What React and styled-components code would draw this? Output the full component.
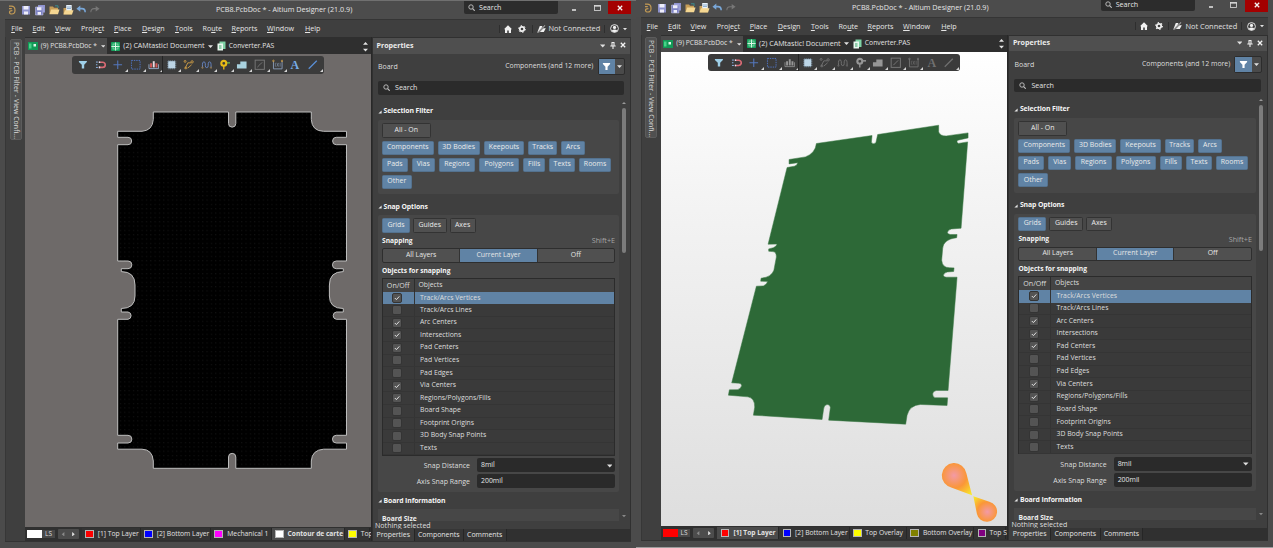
import React from "react";
import styled, { createGlobalStyle, css } from "styled-components";

const Global = createGlobalStyle`
  * { box-sizing: border-box; }
  html, body { margin: 0; padding: 0; }
  body { width: 1273px; height: 548px; overflow: hidden; background: #4b4b4b;
    font-family: "Open Sans", "Noto Sans", sans-serif; font-size: 7px; line-height: 1; color: #dedede; }
`;

const Desktop = styled.main`display: flex; width: 1273px; height: 548px; overflow: hidden;`;
const Frame = styled.div`
  flex: none; overflow: hidden; height: 548px;
  width: ${(p) => p.$w}px;
  ${(p) => p.$lined && css`border-bottom: 1px solid #9c9c9c;`}
`;
const Win = styled.section`
  display: flex; flex-direction: column; width: 636px; height: 550px; background: #4b4b4b;
  ${(p) => p.$raised && css`zoom: 1.0025; margin-top: -2.3px;`}
`;

/* title bar */
const TitleBar = styled.header`
  display: flex; align-items: center; flex: none; height: 19px; background: #4c4c4c; border-top: 1px solid #707070;
  padding-left: 6px; width: 636px;
`;
const QuickIcons = styled.div`display: flex; align-items: center; gap: 2px; width: 110px; svg { flex: none; }`;
const Title = styled.div`width: 352px; padding-left: 100px; font-size: 7.2px; white-space: nowrap; color: #e6e6e6;`;
const TitleSearch = styled.div`
  display: flex; align-items: center; gap: 4px; align-self: flex-start; width: 94px; height: 12.5px; padding-left: 4px; margin-left: -4px;
  background: #2c2c2c; border-radius: 0 0 2px 2px; font-size: 7.1px; color: #e6e6e6;
`;
const WinButtons = styled.div`display: flex; align-self: flex-start; margin-left: 5px;`;
const WinButton = styled.div`
  display: flex; align-items: center; justify-content: center; width: 22.7px; height: 13px;
  background: ${(p) => (p.$close ? "#a40000" : "transparent")};
`;

/* menu */
const MenuBar = styled.nav`
  display: flex; align-items: center; flex: none; width: 626px; height: 18px; margin-left: 5px; padding-left: 6.2px; background: #3f3f3f;
  border-top: 1px solid #353535;
`;
const MenuItem = styled.div`
  width: ${(p) => p.$w}px; font-size: 7.15px; white-space: nowrap; color: #e6e6e6;
  u { text-decoration-thickness: 0.6px; text-underline-offset: 1px; }
`;
const MenuTools = styled.div`display: flex; align-items: center; margin-left: auto; padding-right: 4px; white-space: nowrap; svg { flex: none; }`;
const Connection = styled.div`width: 57.5px; padding-left: 3px; font-size: 7.4px; color: #e0e0e0;`;
const Divider = styled.i`width: 1px; height: 8px; background: #2e2e2e; margin: 0 ${(p) => p.$r ?? 4}px 0 ${(p) => p.$l ?? 4}px;`;
const GearSlot = styled.span`display: flex; margin-left: 6.5px;`;
const CaretSlot = styled.span`display: flex; margin-left: 4.5px;`;

/* body */
const Body = styled.div`display: flex; flex: none; width: 626px; height: 505px; margin-left: 5px; background: #303030; border-bottom: 1px solid #333;`;
const Rail = styled.aside`width: 20px; flex: none; background: #3f3f3f; padding: 2px 0 0 3.5px; border-left: 1px solid #373737;`;
const RailTab = styled.div`
  display: flex; align-items: center; width: 12px; height: 101px; background: #505050; border: 1px solid #5c5c5c; border-radius: 2px;
  writing-mode: vertical-rl; padding-top: 2px; white-space: nowrap; font-size: 6.9px; letter-spacing: 0.08px;
`;
const Center = styled.div`display: flex; flex-direction: column; width: 347px; flex: none; border-right: 1px solid #282828;`;
const DocTabs = styled.div`display: flex; align-items: center; height: 17px; flex: none; padding-top: 1px; background: #2f2f2f;`;
const DocTab = styled.div`
  display: flex; align-items: center; height: 15.5px; width: ${(p) => p.$w}px; padding-left: ${(p) => p.$pl}px; gap: 3px;
  white-space: nowrap; font-size: ${(p) => p.$fs || 7}px; color: #e2e2e2;
  background: ${(p) => (p.$active ? "#4b4b4b" : "transparent")};
  svg { flex: none; }
  svg:last-child { margin-left: ${(p) => p.$caret || 0}px; }
`;
const Canvas = styled.div`
  position: relative; height: 473px; flex: none; overflow: hidden;
  background: ${(p) => (p.$light ? "linear-gradient(#ffffff, #f4f4f4 30%, #dedede)" : "#6e6a69")};
`;
const Toolbar = styled.div`
  position: absolute; left: 47px; top: 2px; width: 252px; height: 17.5px; display: flex; align-items: center; padding-left: 2px;
  background: #3b3b3b; border-radius: 3px;
`;
const Tool = styled.div`
  display: flex; align-items: center; justify-content: center; position: relative; width: 17.7px; height: 17px;
  svg { display: block; }
  ${(p) => p.$more && css`&::after { content: ""; position: absolute; right: -1px; bottom: 1px; border-left: 3px solid transparent; border-bottom: 3px solid #d4d4d4; }`}
  ${(p) => p.$rule && css`border-left: 1px solid #252525;`}
`;
const LayerBar = styled.div`display: flex; align-items: center; height: 14px; flex: none; padding-left: 2px; overflow: hidden; background: #303030;`;
const LayerSet = styled.div`
  display: flex; align-items: center; flex: none; width: 27.5px; height: 8.5px; margin-right: 3.3px; background: #484848; font-size: 6.5px; color: #ddd;
  &::before { content: ""; flex: none; width: 15px; height: 8px; margin-right: 3px; background: ${(p) => p.$color}; }
`;
const LayerNav = styled.div`
  display: flex; align-items: center; justify-content: space-around; flex: none; width: 21px; height: 10px; margin-right: 3px; background: #4c4c4c; border-radius: 1px;
`;
const LayerTab = styled.div`
  display: flex; align-items: center; flex: none; width: ${(p) => p.$w}px; height: 12.5px; padding-left: 3.5px; white-space: nowrap;
  font-size: ${(p) => (p.$active ? 6.6 : 6.75)}px; font-weight: ${(p) => (p.$active ? 700 : 400)};
  background: ${(p) => (p.$active ? "#4b4b4b" : "#343434")}; border-right: 1px solid #272727; color: #e2e2e2;
  &::before { content: ""; flex: none; width: 6.5px; height: 6.5px; margin-right: ${(p) => p.$gap || 4.5}px; border: 0.6px solid #b5b5b5; background: ${(p) => p.$color}; }
`;

/* properties panel */
const Panel = styled.aside`display: flex; flex-direction: column; width: 257px; margin-left: 1px; height: 504px;`;
const PanelHead = styled.div`
  display: flex; align-items: center; height: 15.5px; margin-top: 1px; flex: none; padding: 0 4px 1px 3.5px; background: #4f4f4f;
  font-size: 7.1px; font-weight: 700; color: #ececec;
  svg { margin-left: 4.5px; } svg:first-of-type { margin-left: auto; }
`;
const PanelBody = styled.div`position: relative; display: flex; flex-direction: column; height: 475px; flex: none; padding: 0 5px; background: #3f3f3f; overflow: hidden;`;
const ObjectRow = styled.div`display: flex; align-items: center; height: 25px; flex: none; margin-top: 0.5px;`;
const Scope = styled.div`margin-left: auto; margin-right: 4.2px; font-size: 6.9px;`;
const FilterButton = styled.div`display: flex; width: 27.5px; height: 17.5px; border: 1px solid #2c2c2c; border-radius: 2px; background: #4a4a4a;`;
const FilterHalf = styled.div`display: flex; align-items: center; justify-content: center; width: ${(p) => p.$w}px; background: ${(p) => (p.$on ? "#6083a5" : "transparent")};`;
const SearchBox = styled.div`
  display: flex; align-items: center; gap: 5px; flex: none; width: 246px; height: 13.5px; margin-top: 2px; padding-left: 5px; background: #2b2b2b; border-radius: 2px;
  font-size: 7.1px; color: #e2e2e2;
`;
const Heading = styled.div`
  display: flex; align-items: center; gap: 1.5px; flex: none; height: 10px; margin-top: ${(p) => p.$mt}px; font-size: 6.85px; font-weight: 700; letter-spacing: -0.1px; color: #f4f4f4;
`;
const Group = styled.div`flex: none; width: 241px; height: ${(p) => p.$h}px; margin-top: 3px; padding: ${(p) => p.$pt}px 4px 0; background: #474747; border-radius: 2px;`;
const Chips = styled.div`display: flex; gap: ${(p) => p.$gap || 4.1}px; margin-top: ${(p) => p.$mt || 0}px;`;
const Chip = styled.div`
  display: flex; align-items: center; justify-content: center; flex: none; width: ${(p) => p.$w}px; height: ${(p) => p.$h || 13.4}px;
  padding-bottom: 0.3px; border-radius: 1.5px; font-size: 6.95px; white-space: nowrap; color: #eaeaea;
  border: 1px solid ${(p) => (p.$off ? "#333" : "#54728f")};
  background: ${(p) => (p.$off ? "#505050" : "#6083a5")};
`;
const Caption = styled.div`
  display: flex; justify-content: space-between; align-items: center; height: 10px; margin-top: ${(p) => p.$mt}px;
  font-size: 6.65px; font-weight: 700; color: #f4f4f4;
  span { font-weight: 400; font-size: 7.2px; color: #a5a5a5; }
`;
const Segments = styled.div`display: flex; width: 233px; height: 14.4px; margin-top: 2.4px; border: 1px solid #2e2e2e; border-radius: 2px; background: #505050;`;
const Segment = styled.div`
  flex: 1; display: flex; align-items: center; justify-content: center; font-size: 6.9px; color: #e6e6e6;
  background: ${(p) => (p.$on ? "#6083a5" : "transparent")};
  & + & { border-left: 1px solid #333; }
`;
const Table = styled.div`width: 233px; height: 177.5px; margin-top: 2px; border: 1px solid #2b2b2b; background: #3a3a3a;`;
const Row = styled.div`
  display: flex; align-items: center; height: 12.58px;
  background: ${(p) => (p.$head ? "#444" : p.$on ? "#6083a5" : "transparent")};
  border-bottom: ${(p) => (p.$on || p.$head ? "none" : "1px solid #353535")};
`;
const CheckCell = styled.div`
  display: flex; align-items: center; justify-content: center; width: 31.5px; height: 100%; padding-right: ${(p) => (p.$dark ? 0 : 2)}px;
  font-size: 7.1px; border-right: 1px solid ${(p) => (p.$dark ? "#2d2d2d" : "#343434")};
`;
const Box = styled.div`
  display: flex; align-items: center; justify-content: center; width: 10px; height: 10px; border: 1px solid #343434; border-radius: 2px; background: #545454;
`;
const NameCell = styled.div`padding-left: ${(p) => p.$pl || 5.5}px; font-size: 6.85px;`;
const Field = styled.div`display: flex; align-items: center; height: 14px; margin-top: ${(p) => p.$mt}px;`;
const FieldLabel = styled.label`width: 88px; text-align: right; font-size: 7px;`;
const FieldBox = styled.div`
  display: flex; align-items: center; justify-content: space-between; width: 138px; height: 14px; margin-left: 7px; padding: 0 3px 0 4px;
  background: #2a2a2a; border-radius: 2px; font-size: 6.9px; color: #e6e6e6;
`;
const Cut = styled.div`
  flex: none; width: 241px; height: 11.5px; margin-top: 3px; padding: 6.4px 0 0 4px; overflow: hidden; background: #474747; font-size: 6.7px; font-weight: 700; color: #eee;
`;
const Status = styled.div`flex: none; margin: 0.7px 0 0 -3px; font-size: 7.1px;`;
const Scroller = styled.div`
  position: absolute; right: 3.3px; top: 47px; height: 417px; width: 5px; display: flex; flex-direction: column; align-items: center;
`;
const Thumb = styled.div`width: 3.8px; height: 145px; margin: 3px 0 auto; border-radius: 2px; background: #7c7c7c;`;
const PanelTabs = styled.div`display: flex; height: 12.5px; flex: none; background: #303030;`;
const PanelTab = styled.div`
  display: flex; align-items: center; justify-content: center; width: ${(p) => p.$w}px; height: 12px; padding-top: 1px; font-size: 6.95px;
  background: ${(p) => (p.$on ? "#3f3f3f" : "#363636")}; border-right: 1px solid #262626; color: #e4e4e4;
`;

const Caret = ({ up, left, right, s = 5, c = "#e0e0e0" }) => (
  <svg width={s} height={s} viewBox="0 0 6 6"><path fill={c} d={up ? "M0 4.5L3 1.5L6 4.5Z" : left ? "M4.5 0L1 3L4.5 6Z" : right ? "M1.5 0L5 3L1.5 6Z" : "M0 1.5H6L3 4.8Z"} /></svg>
);
const Fold = () => <svg width="4" height="4" viewBox="0 0 4 4"><path d="M3.6 .4V3.6H.4Z" fill="#e8e8e8" /></svg>;
const Cross = () => <svg width="6" height="6" viewBox="0 0 6 6"><path d="M.8.8L5.2 5.2M5.2.8L.8 5.2" stroke="#f4f4f4" strokeWidth="1.3" /></svg>;
const Lens = () => (
  <svg width="7" height="7" viewBox="0 0 7 7" fill="none" stroke="#c4c4c4"><circle cx="3" cy="3" r="2.2" strokeWidth=".9" /><path d="M4.6 4.6L6.7 6.7" strokeWidth="1.1" /></svg>
);
const Funnel = ({ c = "#fff", s = 9 }) => <svg width={s} height={s} viewBox="0 0 10 10"><path fill={c} d="M1 1H9V2.3L6.2 5.2V9H3.8V5.2L1 2.3Z" /></svg>;

const Quick = () => (
  <QuickIcons>
    <svg width="12" height="12" viewBox="0 0 12 12" fill="none" stroke="#c29a55" strokeWidth="1.2"><path d="M3 2.2H5.2C7.7 2.2 9 4 9 6.2C9 8.6 7.4 10 5.7 10C4.3 10 3.5 9.2 3.5 8.2C3.5 7 4.5 6.7 6.4 6.7M3 4.6H5.8" /></svg>
    <svg width="12" height="12" viewBox="0 0 12 12"><path d="M2 2H10V10.5H2Z" fill="#8f93cf" /><path d="M3.5 2H8.5V5.6H3.5ZM4 7.5H8V10.5H4Z" fill="#eeeefa" /></svg>
    <svg width="12" height="12" viewBox="0 0 12 12"><path d="M4 1H11V8.5H4Z" fill="#8f93cf" /><path d="M1.5 3H9V11H1.5Z" fill="#7e83c4" stroke="#c9cbee" strokeWidth=".5" /><path d="M3 3.3H7.5V6.3H3ZM3.6 8H7V10.7H3.6Z" fill="#eeeefa" /></svg>
    <svg width="12" height="12" viewBox="0 0 12 12"><path d="M1.5 2.5H5L6 3.7H10V10H1.5Z" fill="#c79d57" /><path d="M3.2 5.5H11.5L10 10.3H1.5Z" fill="#f5d792" /><path d="M7 1.8H10V4" stroke="#3c8a8d" fill="none" /></svg>
    <svg width="12" height="12" viewBox="0 0 12 12"><path d="M1.5 4H10V10.3H1.5Z" fill="#c79d57" /><path d="M4.2 1H9.7V7H4.2Z" fill="#e7f1fa" /><path d="M5 3H9M5 4.5H9" stroke="#6b94bd" strokeWidth=".7" /><path d="M3 6.3H11.5L10 10.6H1.5Z" fill="#f5d792" /></svg>
    <svg width="11" height="12" viewBox="0 0 12 12" fill="none"><path d="M3 4.5H6.5C9 4.5 10 6 10 8.5" stroke="#79a7d8" strokeWidth="1.7" /><path d="M.5 4.5L4.7 1.2V7.8Z" fill="#79a7d8" /></svg>
    <svg width="11" height="12" viewBox="0 0 12 12" fill="none"><path d="M9 4.5H5.5C3 4.5 2 6 2 8.5" stroke="#777" strokeWidth="1.1" /><path d="M11.5 4.5L7.3 1.5V7.5Z" fill="#777" /></svg>
  </QuickIcons>
);

const glyphs = {
  funnel: (f) => <path fill={f("#9fd0e8", 1)} d="M2 2H10.3V3.2L7.5 6V9.8H5V6L2 3.2Z" />,
  magnet: () => <g fill="none"><path d="M1 3.2H3M1 6H2.5M1 8.8H3" stroke="#8db7e8" /><path d="M4 3.4H8A2.6 2.6 0 0 1 8 8.8H4" stroke="#d86a74" strokeWidth="1.7" /><path d="M4 3.4H5.4M4 8.8H5.4" stroke="#dfe6f5" strokeWidth="1.7" /></g>,
  plus: () => <path d="M6 1.5V10.5M1.5 6H10.5" stroke="#5477bd" strokeWidth="1.1" />,
  marquee: () => <rect x="1.5" y="1.5" width="9" height="9" fill="none" stroke="#4f73c0" strokeDasharray="1.5 1" />,
  align: (f) => <g><path d="M2.2 4.5H4.2V8.8H2.2ZM7.8 4.5H9.8V8.8H7.8Z" fill={f("#d65b5b")} /><path d="M5 2.3H7V8.8H5Z" fill={f("#e9d9e0")} /><path d="M1 5.5V10H11V5.5" fill="none" stroke={f("#a9c2e5")} strokeWidth=".8" /></g>,
  part: () => <g><path d="M1.2 3H10.8M1.2 5H10.8M1.2 7H10.8M1.2 9H10.8M3 1.2V10.8M5 1.2V10.8M7 1.2V10.8M9 1.2V10.8" stroke="#8aa7bd" strokeWidth=".7" /><rect x="2.4" y="2.4" width="7.2" height="7.2" rx=".8" fill="#bcd5e6" /></g>,
  route: (f) => <g fill="none" stroke={f("#c69845")}><path d="M2 10L5 4H8.5M5 9.5L9 6" strokeWidth="1" /><circle cx="2.2" cy="2.5" r="1" /><circle cx="9.5" cy="3" r="1.2" /><circle cx="3" cy="9.3" r="1" /></g>,
  tune: (f) => <g fill="none"><path d="M1.5 9V5.5Q1.5 3 3 3T4.5 5V7Q4.5 9 6 9T7.5 7V5Q7.5 3 9 3T10.5 5.5V9" stroke={f("#6584c0")} /><circle cx="1.5" cy="9" r=".8" stroke={f("#b89050")} strokeWidth=".6" /><circle cx="10.5" cy="9" r=".8" stroke={f("#b89050")} strokeWidth=".6" /></g>,
  via: (f) => <g fill="none"><path d="M7 4H11.5" stroke={f("#62a94b")} strokeWidth="1.6" /><circle cx="5" cy="4.5" r="2.6" stroke={f("#e8bc16")} strokeWidth="2.2" /><path d="M5 7V11" stroke={f("#e8bc16")} strokeWidth="1.4" /></g>,
  poly: (f) => <path fill={f("#a9d2df")} d="M1 5.5H4.5V2.5H11V9.8H1Z" />,
  cutout: () => <g fill="none" stroke="#777"><rect x="1.2" y="1.2" width="9.6" height="9.6" /><path d="M3.5 8.5L6 6L8.5 3.5" /></g>,
  dim: (f) => <g fill="none"><path d="M1.5 2V10.3H10.5V2" stroke={f("#8799b5")} /><path d="M3.5 4V8M8.5 4V8M5 4L7 8M7 4L5 8" stroke={f("#8799b5")} strokeWidth=".6" /><circle cx="1.5" cy="2" r=".8" stroke={f("#c69845")} /><circle cx="10.5" cy="2" r=".8" stroke={f("#c69845")} /></g>,
  text: (f) => <text x="6" y="10.3" textAnchor="middle" fontFamily="Liberation Serif, serif" fontWeight="700" fontSize="12.5" fill={f("#78ade6")}>A</text>,
  line: (f) => <path d="M1.8 10.2L10.2 1.8" stroke={f("#5a8fd6")} strokeWidth="1.3" />,
};
const tools = ["funnel", "magnet", "plus", "marquee", "align", "part", "route", "tune", "via", "poly", "cutout", "dim", "text", "line"];

const ToolStrip = ({ dim }) => (
  <Toolbar>
    {tools.map((t, i) => (
      <Tool key={t} $more={i > 1 && t !== "text"} $rule={t === "part"}>
        <svg width="11.5" height="11.5" viewBox="0 0 12 12">{glyphs[t]((c, keep) => (dim && !keep ? (t === "via" || t === "poly" || t === "align" ? "#969696" : "#707070") : c))}</svg>
      </Tool>
    ))}
  </Toolbar>
);

const boardOutline =
  "M153.3 112H228.5V123.5A3.65 3.65 0 0 0 235.8 123.5V112H311.3V119.5Q312 131 323.5 131.3H346.5V137.3H336.3A3.7 3.7 0 0 0 336.3 144.7H346.5V261H336.3A3.8 3.8 0 0 0 336.3 268.7H343.3V271.6Q329.4 271.6 329.4 285V296Q329.4 308.5 343.3 308.5V312H336.3A3.7 3.7 0 0 0 336.3 319.3H346.5V435.3H336.3A3.8 3.8 0 0 0 336.3 443H346.5V449.2H323.5Q312 450 311.3 461V468.3H235.8V457A3.65 3.65 0 0 0 228.5 457V468.3H153.3V461Q152.5 449.5 142 449.2H117.7V443H128A3.8 3.8 0 0 0 128 435.3H117.7V319.3H128A3.7 3.7 0 0 0 128 312H121.3V308.5Q135 308.5 135 296V285Q135 271.6 121.3 271.6V268.7H128A3.8 3.8 0 0 0 128 261H117.7V144.7H128A3.7 3.7 0 0 0 128 137.3H117.7V131.3H142Q152.5 130.5 153.3 119.5Z";

const Board2D = () => (
  <svg width="346" height="473" viewBox="25 54 346 473" display="block">
    <defs><pattern id="dots" x="119" y="112" width="4.33" height="4.33" patternUnits="userSpaceOnUse"><rect x="1" y="1" width="1" height="1" fill="#171717" /></pattern></defs>
    <path d={boardOutline} fill="#000" />
    <path d={boardOutline} fill="url(#dots)" stroke="#bdbdbd" strokeWidth="1" />
  </svg>
);

const Board3D = () => (
  <svg width="346" height="473" viewBox="660.6 51.8 346.9 474.2" display="block">
    <defs>
      <radialGradient id="big" gradientUnits="userSpaceOnUse" cx="953.7" cy="475.3" r="26"><stop offset="0" stopColor="#f39aa6" /><stop offset=".48" stopColor="#fa9638" /><stop offset="1" stopColor="#f8ee28" /></radialGradient>
      <radialGradient id="small" gradientUnits="userSpaceOnUse" cx="987" cy="511.7" r="20.5"><stop offset="0" stopColor="#f39aa6" /><stop offset=".48" stopColor="#fa9638" /><stop offset="1" stopColor="#f8ee28" /></radialGradient>
    </defs>
    <path fill="#2d6937" stroke="#3b7845" strokeWidth=".5" d="M816 143.3L871.7 135.3L871 142.3Q873 144.6 875.5 142.5L877.3 134.3L938.3 125V131.7Q940 136 946 135.7L967.7 132.7V137.7L957.5 140Q955.5 141.6 958 143.2L967.3 141.7L960.7 228L951 228.8Q947.5 229.7 947 232.5Q947.8 234.3 950 234.3H956.7L956.3 237.5Q943 239 942.3 248.3L941.3 260Q942 267.5 949 267.5L953.7 267.7L953.3 271.3L947 271.8Q943.3 272.5 943 275.5Q944 277 946 277H956.7L947.7 390.3H936Q932.5 390.8 932.3 393.8Q932.5 397.3 935 397.5L947.3 397.7L946.7 405.3L920 404.3Q909.5 405 906.7 415L905.3 424L828.3 420L830 407.3Q829.5 404.2 826.7 404.3Q823.5 405 823.2 409L821.7 419.3L753 415L754.3 407Q754.5 398 747.5 396.7L728 395L729 389.7L737 389.5Q740.5 388.7 741.3 385.3Q741 383 738.5 383L731.3 382.7L756 286L763 285.7Q766 284.8 767.3 281.2L760.3 281L760.7 278Q771 277 773.5 270L776 256.7Q776 251.3 772 251.4L768.3 251V248.7L773 247.5Q776 246.5 776.7 243.9L767.7 244L786.7 167.3L794 166Q797 165.3 797.3 162.5L788.7 163.7V159.3L805 156.7Q815 153 816 143.3Z" />
    <path fill="url(#big)" d="M966 473A12.4 12.4 0 1 0 951.5 487.5L971.7 495.2Z" />
    <path fill="url(#small)" d="M976.5 513.5A10.2 10.2 0 1 0 989 501.6L973 496.2Z" />
  </svg>
);

const menus = [["", "F", "ile", 21.3], ["", "E", "dit", 22.5], ["", "V", "iew", 26], ["Proje", "c", "t", 33], ["", "P", "lace", 28], ["", "D", "esign", 33], ["", "T", "ools", 27.5], ["Ro", "u", "te", 29], ["", "R", "eports", 35.5], ["", "W", "indow", 38], ["", "H", "elp", 20]];
const chipRows = [
  [["Components", 51.6], ["3D Bodies", 42], ["Keepouts", 40.3], ["Tracks", 29.2], ["Arcs", 23.2]],
  [["Pads", 25.6], ["Vias", 23], ["Regions", 36.2], ["Polygons", 39.8], ["Fills", 22.4], ["Texts", 25.5], ["Rooms", 32]],
  [["Other", 29.6]],
];
const objects = [["Track/Arcs Vertices", 1], ["Track/Arcs Lines", 0], ["Arc Centers", 1], ["Intersections", 1], ["Pad Centers", 1], ["Pad Vertices", 0], ["Pad Edges", 0], ["Via Centers", 1], ["Regions/Polygons/Fills", 1], ["Board Shape", 0], ["Footprint Origins", 0], ["3D Body Snap Points", 0], ["Texts", 0]];

const Properties = () => (
  <Panel>
    <PanelHead>
      Properties
      <Caret s={5.5} />
      <svg width="6" height="7" viewBox="0 0 6 7"><path d="M1.5 .5H4.5M2 .5V3.6M4 .5V3.6M.3 4H5.7M3 4V7" stroke="#eee" strokeWidth="1.1" /></svg>
      <Cross />
    </PanelHead>
    <PanelBody>
      <ObjectRow>
        Board
        <Scope>Components (and 12 more)</Scope>
        <FilterButton><FilterHalf $w={17} $on><Funnel /></FilterHalf><FilterHalf $w={9}><Caret s={5} /></FilterHalf></FilterButton>
      </ObjectRow>
      <SearchBox><Lens />Search</SearchBox>
      <Heading $mt={12.4}><Fold />Selection Filter</Heading>
      <Group $h={74.5} $pt={3.2}>
        <Chips><Chip $off $w={48.5} $h={15.4}>All - On</Chip></Chips>
        {chipRows.map((r, i) => <Chips key={i} $mt={i ? 3.7 : 2.7}>{r.map(([n, w]) => <Chip key={n} $w={w}>{n}</Chip>)}</Chips>)}
      </Group>
      <Heading $mt={8}><Fold />Snap Options</Heading>
      <Group $h={277} $pt={3}>
        <Chips $gap={2.8}><Chip $w={28} $h={14.5}>Grids</Chip><Chip $off $w={34} $h={14.5}>Guides</Chip><Chip $off $w={26} $h={14.5}>Axes</Chip></Chips>
        <Caption $mt={3.2}>Snapping<span>Shift+E</span></Caption>
        <Segments><Segment>All Layers</Segment><Segment $on>Current Layer</Segment><Segment>Off</Segment></Segments>
        <Caption $mt={3.3}>Objects for snapping</Caption>
        <Table>
          <Row $head><CheckCell $dark>On/Off</CheckCell><NameCell $pl={4}>Objects</NameCell></Row>
          {objects.map(([n, on], i) => (
            <Row key={n} $on={i === 0}>
              <CheckCell><Box>{on ? <svg width="6" height="6" viewBox="0 0 6 6"><path d="M.8 3L2.4 4.6L5.3 1.4" fill="none" stroke="#e2e2e2" /></svg> : null}</Box></CheckCell>
              <NameCell>{n}</NameCell>
            </Row>
          ))}
        </Table>
        <Field $mt={2.8}><FieldLabel>Snap Distance</FieldLabel><FieldBox>8mil<Caret s={5.5} /></FieldBox></Field>
        <Field $mt={2}><FieldLabel>Axis Snap Range</FieldLabel><FieldBox>200mil</FieldBox></Field>
      </Group>
      <Heading $mt={4.1}><Fold />Board Information</Heading>
      <Cut>Board Size</Cut>
      <Status>Nothing selected</Status>
      <Scroller><Caret up s={4} c="#999" /><Thumb /><Caret s={4} c="#888" /></Scroller>
    </PanelBody>
    <PanelTabs><PanelTab $w={41.5} $on>Properties</PanelTab><PanelTab $w={49.5}>Components</PanelTab><PanelTab $w={42.5}>Comments</PanelTab></PanelTabs>
  </Panel>
);

const Designer = ({ raised, swatch, layers }) => (
  <Win $raised={raised}>
    <TitleBar>
      <Quick />
      <Title>PCB8.PcbDoc * - Altium Designer (21.0.9)</Title>
      <TitleSearch><Lens />Search</TitleSearch>
      <WinButtons>
        <WinButton><svg width="6" height="6" viewBox="0 0 6 6"><path d="M1 5H5" stroke="#fff" strokeWidth="1.3" /></svg></WinButton>
        <WinButton><svg width="7" height="6" viewBox="0 0 7 6"><rect x=".5" y=".5" width="6" height="5" fill="none" stroke="#ddd" strokeWidth=".8" /><path d="M.3 1H6.7" stroke="#ddd" strokeWidth="1.2" /></svg></WinButton>
        <WinButton $close><Cross /></WinButton>
      </WinButtons>
    </TitleBar>
    <MenuBar>
      {menus.map(([a, u, b, w]) => <MenuItem key={u + b} $w={w}>{a}<u>{u}</u>{b}</MenuItem>)}
      <MenuTools>
        <Divider />
        <svg width="8" height="8" viewBox="0 0 8 8"><path fill="#f2f2f2" d="M4 .3L8 4.2H7V8H4.8V5.5H3.2V8H1V4.2H0Z" /></svg>
        <GearSlot><svg width="8" height="8" viewBox="0 0 8 8" fill="none" stroke="#f2f2f2"><circle cx="4" cy="4" r="2.2" strokeWidth="1.7" /><circle cx="4" cy="4" r="3.4" strokeWidth="1" strokeDasharray="1.4 2.16" /></svg></GearSlot>
        <Divider $l={5.5} $r={4} />
        <svg width="9" height="8" viewBox="0 0 9 8"><path d="M.3 7.5L2.8 1H5.5L4.5 3.3H8.8L6.8 7H3.5Z" fill="#f2f2f2" /><path d="M1 7.8L8 .5" stroke="#3f3f3f" strokeWidth="1.5" /><path d="M.6 7.8L8.2 .3" stroke="#f2f2f2" strokeWidth=".8" /></svg>
        <Connection>Not Connected</Connection>
        <Divider $l={1} $r={4.5} />
        <svg width="9" height="9" viewBox="0 0 9 9"><circle cx="4.5" cy="4.5" r="3.9" fill="none" stroke="#f2f2f2" strokeWidth=".9" /><circle cx="4.5" cy="3.4" r="1.6" fill="#f2f2f2" /><path d="M1.5 6.8Q4.5 4 7.5 6.8Q4.5 9.5 1.5 6.8" fill="#f2f2f2" /></svg>
        <CaretSlot><Caret s={4} /></CaretSlot>
      </MenuTools>
    </MenuBar>
    <Body>
      <Rail><RailTab>PCB - PCB Filter - View Confi...</RailTab></Rail>
      <Center>
        <DocTabs>
          <DocTab $w={82} $pl={2.8} $active $fs={6.65} $caret={1}>
            <svg width="10" height="8" viewBox="0 0 10 8"><rect width="10" height="8" fill="#139a57" /><path d="M1 1.5H3.5V6.5H1Z" fill="#46d387" /><path d="M5.5 2H8V4.5H5.5Z" fill="#e2f7ea" /></svg>
            (9) PCB8.PcbDoc *<Caret s={4.5} />
          </DocTab>
          <DocTab $w={109} $pl={4.3} $fs={7.1}>
            <svg width="9" height="9" viewBox="0 0 9 9"><rect width="9" height="9" rx="1" fill="#17a05d" /><path d="M4.5 .5V8.5M.5 4.5H8.5" stroke="#e4faec" strokeWidth="1.1" /><rect x="2" y="2" width="5" height="5" fill="none" stroke="#9fe7bd" strokeWidth=".7" /></svg>
            (2) CAMtastic! Document<Caret s={5} />
          </DocTab>
          <DocTab $w={147} $pl={0.8} $fs={6.8}>
            <svg width="9" height="10" viewBox="0 0 9 10"><path d="M2.5 .5H8.5V8H2.5Z" fill="#7fd3a6" /><path d="M.5 2.5H6V9.5H.5Z" fill="#e9f8ef" /><path d="M2 5H4.5M2 7H4.5" stroke="#38a169" /></svg>
            Converter.PAS
          </DocTab>
          <svg width="5" height="11" viewBox="0 0 5 11"><path fill="#e4e4e4" d="M0 3.8L2.5 1L5 3.8ZM0 7.8H5L2.5 10.6Z" /></svg>
        </DocTabs>
        <Canvas $light={raised}>
          {raised ? <Board3D /> : <Board2D />}
          <ToolStrip dim={raised} />
        </Canvas>
        <LayerBar>
          <LayerSet $color={swatch}>LS</LayerSet>
          <LayerNav><Caret left s={4.5} c="#8a8a8a" /><Caret right s={4.5} /></LayerNav>
          {layers.map(([n, c, w, on, gap]) => <LayerTab key={n} $color={c} $w={w} $active={on} $gap={gap}>{n}</LayerTab>)}
        </LayerBar>
      </Center>
      <Properties />
    </Body>
  </Win>
);

export default function App() {
  return (
    <Desktop>
      <Global />
      <Frame $w={635.5}>
        <Designer swatch="#ffffff" layers={[["[1] Top Layer", "#ff0000", 59, false, 4], ["[2] Bottom Layer", "#0000ff", 70, false, 4], ["Mechanical 1", "#ff00ff", 61], ["Contour de carte", "#ffffff", 73, true, 3.8], ["Top", "#ffff00", 25, false, 4]]} />
      </Frame>
      <Frame $w={637.5} $lined>
        <Designer raised swatch="#ff0000" layers={[["[1] Top Layer", "#ff0000", 61.5, true, 4], ["[2] Bottom Layer", "#0000ff", 70.5, false, 4], ["Top Overlay", "#ffff00", 57, false, 3.5], ["Bottom Overlay", "#808000", 67, false, 4], ["Top S", "#800080", 32, false, 3.5]]} />
      </Frame>
    </Desktop>
  );
}
